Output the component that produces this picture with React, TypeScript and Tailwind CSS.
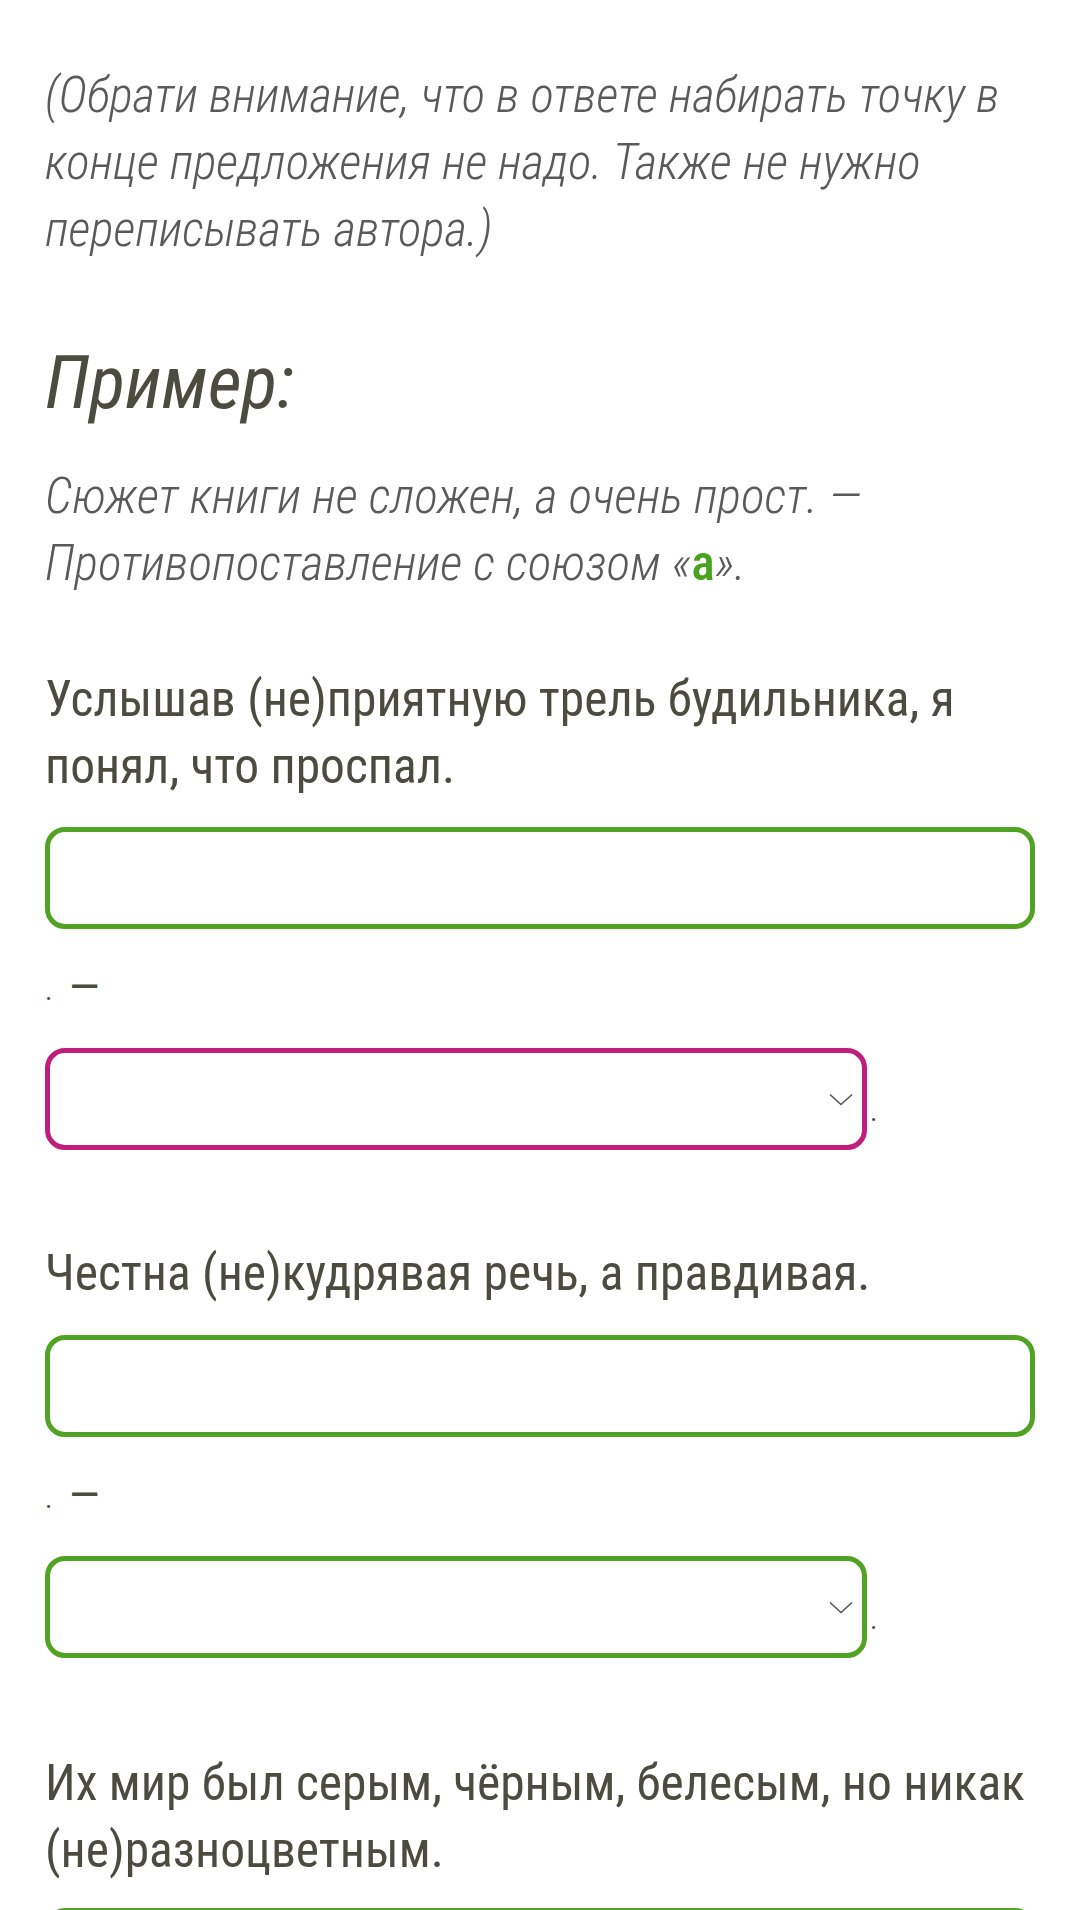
import React from "react";

function Chevron() {
  return (
    <svg width="24" height="13" viewBox="0 0 24 13" fill="none" className="shrink-0">
      <path d="M1 1.5 L12 11.5 L23 1.5" stroke="#555555" strokeWidth="1.6" />
    </svg>
  );
}

function TextInput() {
  return <div className="h-[102px] w-full rounded-[20px] border-[5px] border-[#52a224] bg-white" />;
}

function SelectRow({ color }: { color: "green" | "pink" }) {
  return (
    <div className="mt-[30px] flex items-center">
      <div
        className={
          color === "pink"
            ? "flex h-[102px] w-[822px] items-center justify-end rounded-[20px] border-[5px] border-[#c01e7c] bg-white pr-[9px]"
            : "flex h-[102px] w-[822px] items-center justify-end rounded-[20px] border-[5px] border-[#52a224] bg-white pr-[9px]"
        }
      >
        <Chevron />
      </div>
      <span className="ml-[3px] mt-[26px] text-[28px] leading-none text-[#4b4b40]">.</span>
    </div>
  );
}

function DotDash() {
  return (
    <div className="mt-[22px] flex h-[67px] items-start text-[#4b4b40]">
      <span className="mt-[26px] text-[28px] leading-none">.</span>
      <span className="ml-[16px] mt-[13px] text-[46px] leading-none">—</span>
    </div>
  );
}

export default function App() {
  return (
    <div className="h-[1910px] overflow-hidden bg-white px-[45px] pt-[62px] font-['Roboto_Condensed','Roboto',sans-serif] font-stretch-condensed text-[#4b4b40]">
      <p className="text-[49px] font-light italic leading-[67px] text-[#5a5a5a]">
        (Обрати внимание, что в ответе набирать точку в конце предложения не надо. Также не нужно переписывать автора.)
      </p>

      <h2 className="mt-[80px] text-[74px] font-normal italic leading-[80px] text-[#4b4b40]">Пример:</h2>

      <p className="mt-[40px] text-[49.5px] font-light italic leading-[67px] text-[#5a5a5a]">
        Сюжет книги не сложен, а очень прост. — Противопоставление с союзом «<span className="font-medium not-italic text-[#47a31b]">а</span>».
      </p>

      <div className="mt-[69px]">
        <p className="text-[49.5px] leading-[67px]">Услышав (не)приятную трель будильника, я понял, что проспал.</p>
        <div className="mt-[27px]">
          <TextInput />
        </div>
        <DotDash />
        <SelectRow color="pink" />
      </div>

      <div className="mt-[90px]">
        <p className="text-[49.5px] leading-[67px]">Честна (не)кудрявая речь, а правдивая.</p>
        <div className="mt-[28px]">
          <TextInput />
        </div>
        <DotDash />
        <SelectRow color="green" />
      </div>

      <div className="mt-[92px]">
        <p className="text-[49.5px] leading-[67px]">Их мир был серым, чёрным, белесым, но никак (не)разноцветным.</p>
        <div className="mt-[24px]">
          <TextInput />
        </div>
      </div>
    </div>
  );
}
